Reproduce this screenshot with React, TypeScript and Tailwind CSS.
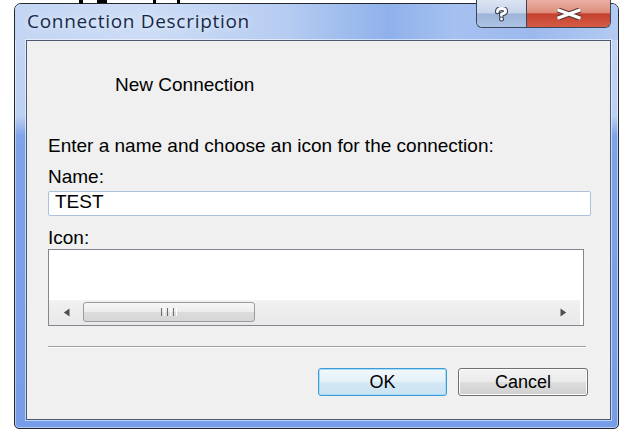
import React from "react";

const HELP_PATH = "M3.4 4.8 Q3.4 1.5 7.5 1.5 Q11.6 1.5 11.6 4.3 Q11.6 6.4 7.5 7.2 L7.5 8.4";

function HelpGlyph() {
  return (
    <svg width="15" height="15" viewBox="0 0 15 15">
      <path d={HELP_PATH} fill="none" stroke="#3b4656" strokeWidth="5" strokeLinecap="round" strokeLinejoin="round" />
      <circle cx="7.5" cy="12" r="2.5" fill="#3b4656" />
      <path d={HELP_PATH} fill="none" stroke="#ffffff" strokeWidth="2.8" strokeLinecap="round" strokeLinejoin="round" />
      <circle cx="7.5" cy="12" r="1.4" fill="#ffffff" />
    </svg>
  );
}

function CloseGlyph() {
  return (
    <svg width="30" height="12" viewBox="0 0 30 12">
      <path d="M3.5 1.8 L26.5 10.2 M3.5 10.2 L26.5 1.8" stroke="#5b3631" strokeWidth="5.4" />
      <path d="M3.5 1.8 L26.5 10.2 M3.5 10.2 L26.5 1.8" stroke="#ffffff" strokeWidth="3.2" />
    </svg>
  );
}

function ArrowLeft() {
  return (
    <svg width="7" height="9" viewBox="0 0 7 9">
      <path d="M6.5 0.5 L0.8 4.5 L6.5 8.5 Z" fill="#4f4f4f" />
    </svg>
  );
}

function ArrowRight() {
  return (
    <svg width="7" height="9" viewBox="0 0 7 9">
      <path d="M0.5 0.5 L6.2 4.5 L0.5 8.5 Z" fill="#4f4f4f" />
    </svg>
  );
}

export default function App() {
  return (
    <div className="relative w-[619px] h-[429px] overflow-hidden bg-white font-['Liberation_Sans',Arial,sans-serif] text-black">
      {/* dialog window */}
      <div className="ml-[14px] mt-[3px] flex h-[426px] w-[605px] flex-col rounded-t-[7px] rounded-b-[5px] border border-[#23272e] bg-[linear-gradient(180deg,#c5d7f4_0px,#bcd0f2_112px,#7fa3e9_132px,#779de8_100%)] shadow-[inset_0_0_0_1px_rgba(255,255,255,0.45)]">
        {/* caption */}
        <div className="flex h-[36px] items-start rounded-t-[6px] bg-[linear-gradient(90deg,#c3d5f4_0%,#cddcf6_22%,#b6ccf1_45%,#8fb1eb_62%,#a6c1f0_73%,#9cb9ee_86%,#b3cbf2_100%)]">
          <div className="pl-[12px] pt-[4px] font-['Open_Sans',sans-serif] text-[19px] leading-[26px] tracking-[0.7px] text-[#152a4a] [text-shadow:0_0_6px_rgba(255,255,255,0.9)]">
            Connection Description
          </div>
          <div className="ml-auto mr-[7px] -mt-[4px] flex h-[28px] w-[135px] overflow-hidden rounded-b-[6px] border-x border-b border-[#3a4658]">
            <div className="flex w-[50px] items-center justify-center border-r border-[#3a4658] bg-[linear-gradient(180deg,#dbe4f2_0%,#c6d4eb_48%,#9db3d8_52%,#adc3e6_100%)] pt-[1px]">
              <HelpGlyph />
            </div>
            <div className="flex flex-1 items-center justify-center bg-[linear-gradient(180deg,#eab0a3_0%,#de8d7c_46%,#c5402e_52%,#d55c47_100%)] pt-[1px]">
              <CloseGlyph />
            </div>
          </div>
        </div>

        {/* client area */}
        <div className="flex flex-1 flex-col pl-[11px] pr-[7px] pb-[8px]">
          <div className="flex flex-1 flex-col border border-[#4b5a70] bg-[#f0f0f0] pl-[21px] pr-[19px] text-[19px] leading-[20px] shadow-[0_0_0_1px_rgba(255,255,255,0.55)]">
            <div className="mt-[34px] pl-[67px]">New Connection</div>
            <div className="mt-[41px]">Enter a name and choose an icon for the connection:</div>
            <div className="mt-[11px]">Name:</div>
            <div className="mt-[4px] flex h-[25px] w-[543px] items-start rounded-[2px] border border-[#abc2da] bg-white pl-[6px]">
              TEST
            </div>
            <div className="mt-[12px]">Icon:</div>
            <div className="mt-[1px] flex h-[77px] w-[536px] flex-col border border-[#828790] bg-white">
              <div className="flex-1" />
              <div className="mr-[3px] flex h-[25px] items-start border-t border-[#f4f4f4] bg-[linear-gradient(180deg,#f1f1f1,#e8e8e8)]">
                <div className="flex h-[23px] w-[34px] items-center justify-center">
                  <ArrowLeft />
                </div>
                <div className="mt-[1px] flex h-[20px] w-[172px] items-center justify-center rounded-[3px] border border-[#9b9b9b] bg-[linear-gradient(180deg,#f7f7f7_0%,#ececec_50%,#dcdcdc_51%,#d6d6d6_100%)]">
                  <div className="flex h-[8px] gap-[2px]">
                    <div className="w-[1px] bg-[#6e6e6e]" />
                    <div className="w-[1px] bg-white" />
                    <div className="w-[1px] bg-[#6e6e6e]" />
                    <div className="w-[1px] bg-white" />
                    <div className="w-[1px] bg-[#6e6e6e]" />
                    <div className="w-[1px] bg-white" />
                  </div>
                </div>
                <div className="flex-1" />
                <div className="flex h-[23px] w-[34px] items-center justify-center">
                  <ArrowRight />
                </div>
              </div>
            </div>
            <div className="mt-[20px] h-[2px] w-[538px] border-t border-[#a0a0a0] border-b border-b-white" />
            <div className="mt-[20px] mr-[3px] flex justify-end gap-[11px] text-[18px]">
              <div className="flex h-[28px] w-[129px] items-center justify-center rounded-[3px] border border-[#3c9bd6] bg-[linear-gradient(180deg,#f2f8fc_0%,#e5f1f9_48%,#d4e8f5_52%,#c9e2f3_100%)] shadow-[inset_0_0_0_1px_#a9dcf5]">
                OK
              </div>
              <div className="flex h-[28px] w-[130px] items-center justify-center rounded-[3px] border border-[#707070] bg-[linear-gradient(180deg,#f2f2f2_0%,#ebebeb_48%,#dddddd_52%,#cfcfcf_100%)] shadow-[inset_0_0_0_1px_#fcfcfc]">
                Cancel
              </div>
            </div>
          </div>
        </div>
      </div>

      {/* dark strokes clipped at the top edge */}
      <div className="absolute left-[79px] top-0 h-[4px] w-[4px] bg-black" />
      <div className="absolute left-[97px] top-0 h-[3px] w-[10px] bg-black" />
      <div className="absolute left-[153px] top-0 h-[4px] w-[3px] bg-black" />
      <div className="absolute left-[177px] top-0 h-[4px] w-[3px] bg-black" />
    </div>
  );
}
